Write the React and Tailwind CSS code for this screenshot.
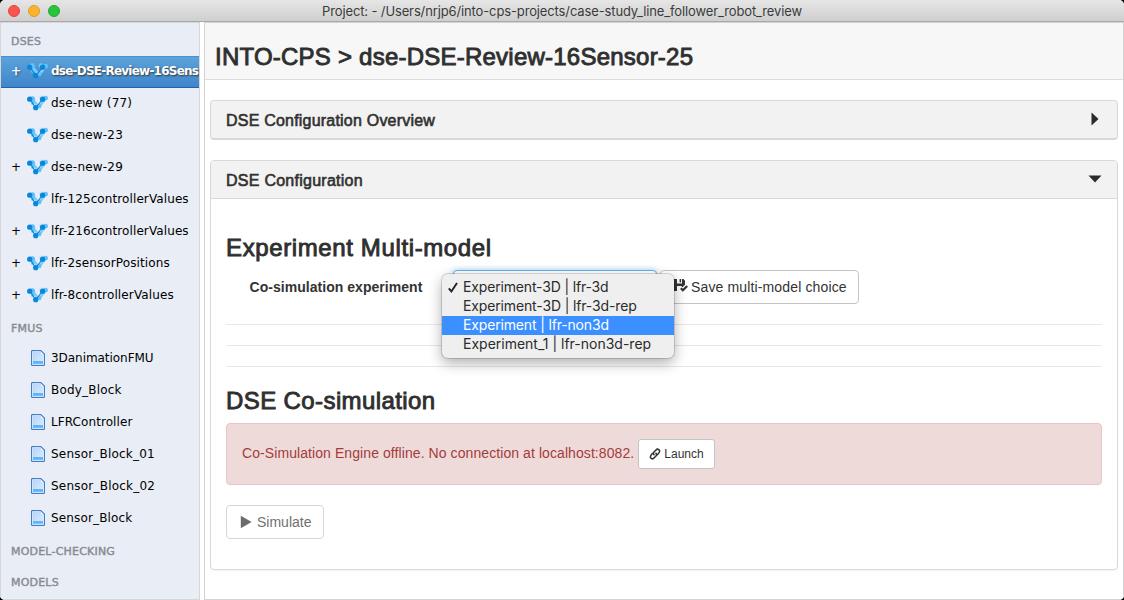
import React from "react";

const DSES = [
  { name: "dse-new (77)", plus: false, cls: "tracking-[0.2px]" },
  { name: "dse-new-23", plus: false, cls: "tracking-[0.2px]" },
  { name: "dse-new-29", plus: true, cls: "tracking-[0.2px]" },
  { name: "lfr-125controllerValues", plus: false, cls: "tracking-[0.1px]" },
  { name: "lfr-216controllerValues", plus: true, cls: "tracking-[0.1px]" },
  { name: "lfr-2sensorPositions", plus: true, cls: "tracking-[0.12px]" },
  { name: "lfr-8controllerValues", plus: true, cls: "tracking-[0.13px]" },
];
const FMUS = [
  { name: "3DanimationFMU", cls: "tracking-[-0.05px]" },
  { name: "Body_Block", cls: "tracking-[0.2px]" },
  { name: "LFRController", cls: "tracking-[0.08px]" },
  { name: "Sensor_Block_01", cls: "tracking-[0.2px]" },
  { name: "Sensor_Block_02", cls: "tracking-[0.22px]" },
  { name: "Sensor_Block", cls: "tracking-[0.15px]" },
];

function GraphIcon() {
  return (
    <svg width="22" height="16" viewBox="0 0 22 16" className="mb-[2px] shrink-0">
      <g fill="#a9e3fb">
        <circle cx="5" cy="2.4" r="2.2" opacity=".55" />
        <circle cx="14" cy="2.4" r="2.2" opacity=".55" />
      </g>
      <g stroke="#7fd0fb" strokeWidth="2.6" fill="none">
        <path d="M5.5 4 12 12M18.5 3.5 12 12" />
      </g>
      <g fill="#5cc4fb">
        <circle cx="5.5" cy="3.8" r="2.5" />
        <circle cx="18.6" cy="3.2" r="2.4" />
        <circle cx="5.8" cy="8" r="1.9" />
        <circle cx="12.2" cy="11" r="2.3" />
      </g>
      <path d="M3 4 8.7 13 15.5 4" stroke="#1583d2" strokeWidth="1.1" fill="none" />
      <g fill="#0b84dc">
        <circle cx="2.7" cy="4.2" r="2.6" />
        <circle cx="15.6" cy="4.2" r="2.6" />
        <circle cx="8.7" cy="12.7" r="2.6" />
      </g>
    </svg>
  );
}

function FileIcon() {
  return (
    <svg width="14" height="16" viewBox="0 0 14 16" className="shrink-0">
      <defs>
        <linearGradient id="page" x1="0" y1="0" x2="1" y2="1">
          <stop offset="0" stopColor="#b4d3fa" />
          <stop offset="1" stopColor="#dcecff" />
        </linearGradient>
      </defs>
      <path d="M1.2.6h8.6l3.6 3.4v10.8q0 .6-.6.6H1.2q-.6 0-.6-.6V1.2q0-.6.6-.6z" fill="#fff" stroke="#3f7fd0" strokeWidth="1.2" />
      <path d="M1.8 1.8h7.4v3.4h3v9H1.8z" fill="url(#page)" />
      <path d="M9.4 1.2v3.4h3.4z" fill="#fff" stroke="#9cc4f2" strokeWidth=".6" />
      <path d="M2 11.2h10v2.4H2z" fill="#37a6f7" />
      <path d="M2 12.2h10" stroke="#8fd0ff" strokeWidth=".6" />
    </svg>
  );
}

function LinkIcon() {
  return (
    <svg width="12" height="12" viewBox="0 0 12 12" fill="none" stroke="#333" strokeWidth="1.5" strokeLinecap="round">
      <path d="M5 6.6C4.2 5.8 4.3 4.9 5 4.1L7 1.9c1.7-1.8 4.6.3 3.2 2.5L8.6 6.6" />
      <path d="M7 5.4c.8.8.7 1.7 0 2.5L5 10.1C3.3 11.900.4 9.8 1.800 7.600L3.400 5.400" />
    </svg>
  );
}

function SaveIcon() {
  return (
    <svg width="15" height="14" viewBox="0 0 15 14" className="mb-[2px]">
      <path d="M0 0h4v4.600h5V0h1.400L12 1.800v4L9.600 8.200 8.200 6.900H4V12H0z" fill="#333" />
      <path d="M6.600 0h1.500v3.400H6.600z" fill="#333" />
      <path d="M7.800 9.200 9.900 11.300 14.200 6.900" fill="none" stroke="#333" strokeWidth="2.100" />
    </svg>
  );
}

function Section({ children, className }) {
  return <div className={`flex items-center pl-[10px] text-[11px] font-medium tracking-[0.2px] text-[#868b92] [-webkit-text-stroke:0.4px_#868b92] ${className}`}>{children}</div>;
}

function Sidebar() {
  return (
    <aside className="w-[200px] shrink-0 overflow-hidden border border-[#d6d6d6] bg-[#e9edf5] font-['DejaVu_Sans',sans-serif] text-[12px] text-black">
      <Section className="h-[33px] pt-1">DSES</Section>
      <div className="flex h-8 items-center border-t border-b border-t-[#4a8fcf] border-b-[#2661a9] bg-linear-to-b from-[#5ba3da] to-[#3f86cb] font-bold text-white [text-shadow:1px_1px_2px_#333]">
        <span className="w-[26px] shrink-0 pl-[10px] pb-0.5 font-normal [-webkit-text-stroke:0.4px_#fff]">+</span>
        <GraphIcon />
        <span className="ml-0.5 pb-0.5 whitespace-nowrap tracking-[-0.77px]">dse-DSE-Review-16Sens</span>
      </div>
      {DSES.map((d) => (
        <div key={d.name} className="flex h-8 items-center">
          <span className="w-[26px] shrink-0 pl-[10px] pb-0.5">{d.plus ? "+" : ""}</span>
          <GraphIcon />
          <span className={`ml-0.5 pb-0.5 whitespace-nowrap ${d.cls}`}>{d.name}</span>
        </div>
      ))}
      <Section className="h-[30px] pt-1">FMUS</Section>
      {FMUS.map((f) => (
        <div key={f.name} className="flex h-8 items-center">
          <span className="flex items-center pl-[30px] pb-[1px]">
            <FileIcon />
            <span className={`ml-[6px] ${f.cls}`}>{f.name}</span>
          </span>
        </div>
      ))}
      <Section className="h-8 pt-1">MODEL-CHECKING</Section>
      <Section className="h-[31px] pt-0.5">MODELS</Section>
    </aside>
  );
}

const OPTIONS = [
  { name: "Experiment-3D | lfr-3d", cls: "tracking-[-0.16px]" },
  { name: "Experiment-3D | lfr-3d-rep", cls: "tracking-[-0.14px]" },
  { name: "Experiment | lfr-non3d", cls: "tracking-[-0.16px]" },
  { name: "Experiment_1 | lfr-non3d-rep", cls: "" },
];

function SelectMenu() {
  return (
    <ul className="absolute top-[3px] left-[-12px] z-10 w-[232px] rounded-[6px] bg-[#efefef] py-1 font-['Inter',sans-serif] text-[14px] text-[#2b2b2b] shadow-[0_5px_14px_rgba(0,0,0,0.32),0_0_0_1px_rgba(0,0,0,0.14)]">
      {OPTIONS.map((o, i) => (
        <li key={o.name} className={i === 2 ? "flex h-[19px] items-center bg-[#3b8fff] pb-px text-white" : "flex h-[19px] items-center pb-px"}>
          <span className="flex w-[21px] shrink-0 justify-center">
            {i === 0 && (
              <svg width="10" height="11" viewBox="0 0 10 11" fill="none" stroke="#222" strokeWidth="1.9">
                <path d="M.8 6.3 3.4 9.4 9 .9" />
              </svg>
            )}
          </span>
          <span className={`whitespace-nowrap ${o.cls}`}>{o.name}</span>
        </li>
      ))}
    </ul>
  );
}

const SEMI = "[-webkit-text-stroke:0.9px_#2f2f2f]";

export default function App() {
  return (
    <div className="h-[600px] w-[1124px] bg-black">
      <div className="flex h-full flex-col overflow-hidden rounded-[5px] bg-white font-['Liberation_Sans',sans-serif] text-[14px] leading-5 text-[#333]">
        <header className="relative flex h-[22px] shrink-0 items-center justify-center border-b border-[#a9a9a9] bg-linear-to-b from-[#e6e6e6] to-[#cfcfcf]">
          <div className="absolute left-2 flex gap-2">
            <span className="size-3 rounded-full border border-[#df4744] bg-[#fc544f]" />
            <span className="size-3 rounded-full border border-[#dd9a2a] bg-[#fdb32c]" />
            <span className="size-3 rounded-full border border-[#1fa832] bg-[#28c43c]" />
          </div>
          <span className="font-['Inter',sans-serif] text-[13px] tracking-[-0.13px] text-[#3b3b3b]">Project: - /Users/nrjp6/into-cps-projects/case-study_line_follower_robot_review</span>
        </header>
        <div className="flex min-h-0 flex-1">
          <Sidebar />
          <main className="ml-1 flex min-w-0 flex-1 flex-col border border-[#d3d3d3] bg-white">
            <div className="flex h-[57px] shrink-0 items-center border-b border-[#dcdcdc] bg-[#f7f7f7] pt-[11px] pl-[10px]">
              <h1 className={`text-[24px] leading-7 tracking-[0.23px] whitespace-nowrap text-[#2f2f2f] ${SEMI}`}>INTO-CPS &gt; dse-DSE-Review-16Sensor-25</h1>
            </div>
            <div className="flex flex-col pt-5 pr-[5px] pl-[5px]">
              <section className="flex h-10 items-center justify-between rounded-[4px] border border-b-2 border-[#d8d8d8] bg-[#f2f2f2] pr-[18px] pl-[15px]">
                <h2 className="pt-[2px] text-[16px] tracking-[0.21px] [-webkit-text-stroke:0.6px_#2f2f2f]">DSE Configuration Overview</h2>
                <svg width="8" height="14" viewBox="0 0 8 14" className="mb-px"><path d="M.5.5v13L7.500 7z" fill="#2b2b2b" /></svg>
              </section>
              <section className="mt-5 h-[410px] rounded-[4px] border border-[#d8d8d8] shadow-[0_1px_1px_rgba(0,0,0,0.05)]">
                <div className="flex h-[38px] items-center justify-between rounded-t-[3px] border-b border-[#d8d8d8] bg-[#f2f2f2] pr-[15px] pl-[15px]">
                  <h2 className="pt-[2px] text-[16px] tracking-[0.26px] [-webkit-text-stroke:0.6px_#2f2f2f]">DSE Configuration</h2>
                  <svg width="14" height="8" viewBox="0 0 14 8" className="mb-[2px]"><path d="M.5.5h13L7 7.500z" fill="#2b2b2b" /></svg>
                </div>
                <div className="px-[15px] pt-[35px]">
                  <h3 className={`h-[28px] text-[24px] leading-7 tracking-[0.62px] text-[#2f2f2f] ${SEMI}`}>Experiment Multi-model</h3>
                  <div className="mt-2 flex h-[34px] items-center">
                    <label className="w-[227px] pl-[23.5px] font-bold tracking-[0.04px]">Co-simulation experiment</label>
                    <div className="relative h-[34px] w-[204px] rounded-[4px] border border-[#66afe9] bg-white shadow-[0_0_6px_rgba(102,175,233,0.6)]">
                      <SelectMenu />
                    </div>
                    <button className="ml-[3px] flex h-[34px] w-[199px] items-center rounded-[4px] border border-[#c4c4c4] bg-white pl-[12px]">
                      <SaveIcon />
                      <span className="ml-[3px] tracking-[0.14px] whitespace-nowrap">Save multi-model choice</span>
                    </button>
                  </div>
                  <hr className="mt-5 border-[#e8e8e8]" />
                  <hr className="mt-5 border-[#e8e8e8]" />
                  <hr className="mt-5 border-[#e8e8e8]" />
                  <h3 className={`mt-[20px] h-[28px] text-[24px] leading-7 tracking-[0.4px] text-[#2f2f2f] ${SEMI}`}>DSE Co-simulation</h3>
                  <div className="mt-2 flex h-[62px] items-center rounded-[4px] border border-[#e8c3c9] bg-[#efdada] pl-[15px] text-[#a33c3b]">
                    <span className="pb-[2px] tracking-[0.08px] whitespace-nowrap">Co-Simulation Engine offline. No connection at localhost:8082.</span>
                    <button className="ml-1 flex h-[30px] w-[77px] items-center rounded-[3px] border border-[#c4c4c4] bg-white pl-[10px] text-[12px] text-[#333]">
                      <LinkIcon />
                      <span className="ml-[3px]">Launch</span>
                    </button>
                  </div>
                  <button className="mt-5 flex h-[34px] w-[98px] items-center rounded-[4px] border border-[#d6d6d6] bg-white pl-[13px] text-[#707070]">
                    <svg width="12" height="14" viewBox="0 0 12 14"><path d="M.8.8v12.400L11.600 7z" fill="#6b6b6b" /></svg>
                    <span className="ml-[5px]">Simulate</span>
                  </button>
                </div>
              </section>
            </div>
          </main>
        </div>
      </div>
    </div>
  );
}
